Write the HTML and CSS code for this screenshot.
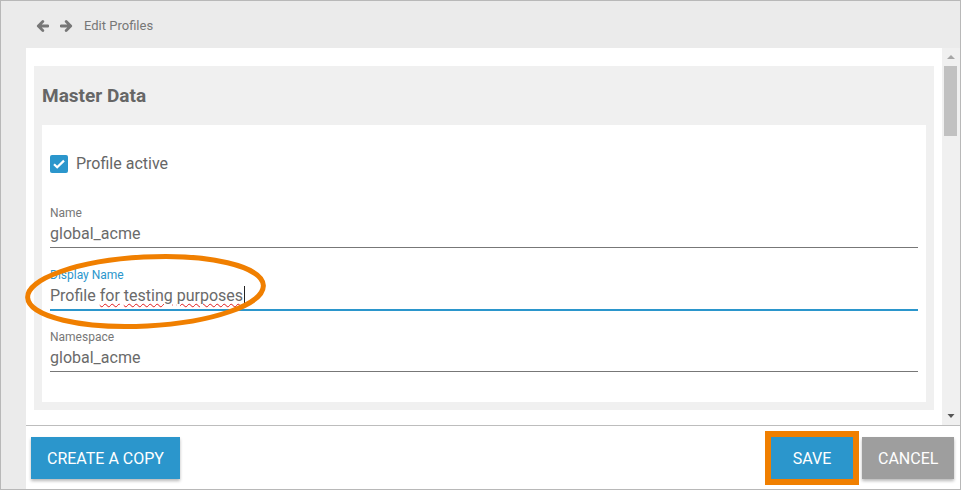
FILE: index.html
```html
<!DOCTYPE html>
<html>
<head>
<meta charset="utf-8">
<title>Edit Profiles</title>
<link rel="stylesheet" href="styles.css">
</head>
<body>
<div class="frame">
  <header class="topbar">
    <svg class="nav-arrow" width="13" height="12" viewBox="0 0 13 12"><path d="M12 6H2.5M6.8 1.6L2.3 6l4.5 4.4" fill="none" stroke="#777" stroke-width="2.8" stroke-linecap="round" stroke-linejoin="round"/></svg>
    <svg class="nav-arrow" width="13" height="12" viewBox="0 0 13 12"><path d="M1 6h9.5M6.2 1.6L10.7 6l-4.5 4.4" fill="none" stroke="#777" stroke-width="2.8" stroke-linecap="round" stroke-linejoin="round"/></svg>
    <span class="title">Edit Profiles</span>
  </header>
  <div class="body">
    <div class="gutter"></div>
    <div class="main">
      <div class="scroller">
        <div class="panel">
          <section class="section">
            <h2 class="section-title">Master Data</h2>
            <div class="card">
              <label class="check-row">
                <span class="checkbox"><svg width="18" height="18" viewBox="0 0 18 18"><path d="M4 9.2l3.2 3.1L14 5.6" fill="none" stroke="#fff" stroke-width="2.2"/></svg></span>
                <span class="check-label">Profile active</span>
              </label>
              <div class="field">
                <div class="field-label">Name</div>
                <div class="field-value">global_acme</div>
              </div>
              <div class="field focused">
                <div class="field-label">Display Name</div>
                <div class="field-value">Profile <span class="spell">for</span> <span class="spell">testing</span> <span class="spell">purposes</span><span class="caret"></span></div>
              </div>
              <div class="field">
                <div class="field-label">Namespace</div>
                <div class="field-value">global_acme</div>
              </div>
            </div>
          </section>
        </div>
        <div class="scrollbar">
          <svg class="sb-arrow" width="18" height="16" viewBox="0 0 18 16"><path d="M5 11h8L9 7z" fill="#a6a6a6"/></svg>
          <div class="thumb"></div>
          <div class="sb-fill"></div>
          <svg class="sb-arrow" width="18" height="16" viewBox="0 0 18 16"><path d="M5.5 5h7L9 9z" fill="#555"/></svg>
        </div>
      </div>
      <footer class="actions">
        <button class="btn btn-primary">Create a copy</button>
        <div class="spacer"></div>
        <button class="btn btn-primary highlighted">Save</button>
        <button class="btn btn-grey">Cancel</button>
      </footer>
    </div>
  </div>
  <svg class="annotation" width="270" height="90" viewBox="0 0 270 90">
    <ellipse cx="128.5" cy="41.5" rx="118" ry="34.5" transform="rotate(-3 128.5 41.5)" fill="none" stroke="#f07f00" stroke-width="5"/>
  </svg>
</div>
</body>
</html>
```

FILE: styles.css
```css
* { box-sizing: border-box; }
html, body { margin: 0; padding: 0; background: #fff; }
body { font-family: Roboto, "Noto Sans", Arial, sans-serif; }

.frame {
  position: relative;
  width: 961px;
  height: 490px;
  border: 1px solid #b8b8b8;
  background: #ebebeb;
  display: flex;
  flex-direction: column;
  overflow: hidden;
}

.topbar {
  height: 47px;
  flex: none;
  display: flex;
  align-items: center;
  padding-left: 35px;
  padding-top: 2px;
}
.nav-arrow { display: block; margin-right: 11px; }
.title { font-size: 13px; color: #777; }

.body { flex: 1; display: flex; min-height: 0; }
.gutter { width: 25px; flex: none; }
.main { flex: 1; display: flex; flex-direction: column; min-width: 0; }

.scroller { height: 377px; flex: none; display: flex; background: #fff; }
.panel { flex: 1; padding: 18px 8px 0; overflow: hidden; }

.section { background: #f0f0f0; padding: 0 8px 8px; }
.section-title {
  margin: 0;
  height: 59px;
  line-height: 60px;
  font-size: 19px;
  font-weight: 700;
  color: #666;
}
.card { background: #fff; padding: 30px 8px 30px; }

.check-row { display: flex; align-items: center; height: 18px; }
.checkbox {
  width: 18px; height: 18px;
  background: #2b96cc;
  border-radius: 2px;
  display: block;
}
.checkbox svg { display: block; }
.check-label { margin-left: 8px; font-size: 16px; line-height: 18px; color: #666; }

.field { border-bottom: 1px solid #777; margin-top: 19px; }
.check-row + .field { margin-top: 32px; }
.field-label { font-size: 12px; line-height: 16px; color: #777; }
.field-value { font-size: 16px; line-height: 25px; padding-bottom: 1px; color: #6a6a6a; }
.field.focused { border-bottom-color: #2b96cc; box-shadow: 0 1px 0 #2b96cc; }
.field.focused .field-label { color: #2b96cc; }
.spell { text-decoration: underline wavy #e01b1b; text-decoration-thickness: 1px; text-underline-offset: 2px; }
.caret { display: inline-block; width: 1px; height: 19px; background: #222; vertical-align: -4px; margin-left: 1px; }

.scrollbar { width: 18px; flex: none; background: #f0f0f0; display: flex; flex-direction: column; }
.sb-arrow { display: block; flex: none; }
.thumb { width: 13px; height: 70px; margin: 2px 0 0 2px; background: #c1c1c1; flex: none; }
.sb-fill { flex: 1; }

.actions {
  flex: 1;
  border-top: 1px solid #bdbdbd;
  background: #fff;
  display: flex;
  align-items: flex-start;
  padding: 11px 6px 0 5px;
  gap: 9px;
}
.spacer { flex: 1; }
.btn {
  height: 42px;
  border: 0;
  padding: 0 16px;
  font-family: Roboto, "Noto Sans", Arial, sans-serif;
  font-size: 16px;
  text-transform: uppercase;
  color: #fff;
  box-shadow: 0 2px 3px rgba(0,0,0,0.28);
  cursor: pointer;
}
.btn-primary { background: #2b96cc; }
.btn-grey { background: #9e9e9e; width: 92px; }
.highlighted { width: 82px; outline: 6px solid #f07f00; }

.annotation { position: absolute; left: 16px; top: 249px; }
```
